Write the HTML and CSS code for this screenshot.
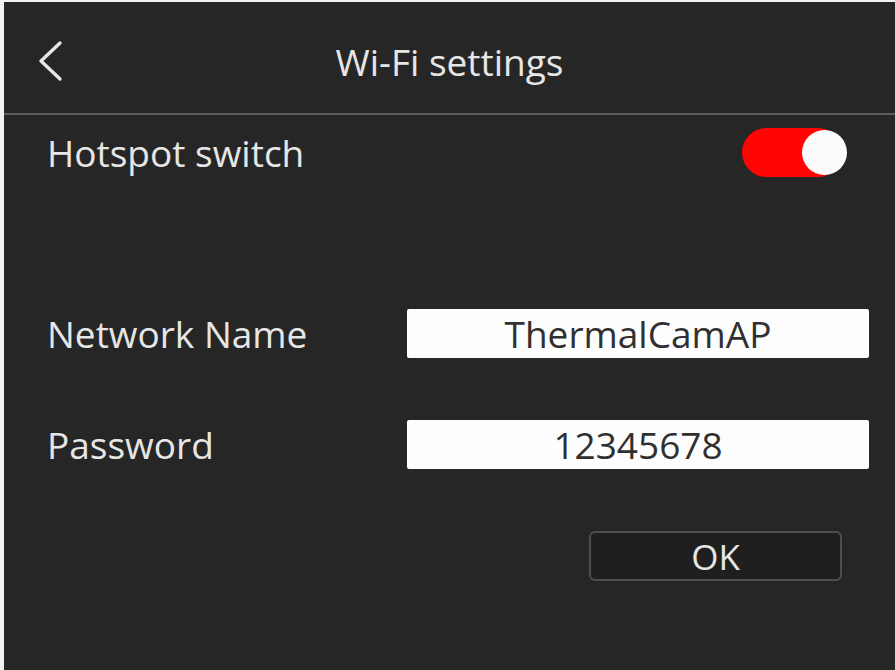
FILE: index.html
```html
<!DOCTYPE html>
<html lang="en">
<head>
<meta charset="utf-8">
<title>Wi-Fi settings</title>
<link rel="stylesheet" href="styles.css">
</head>
<body>
<div class="screen">
  <header class="header">
    <div class="back">
      <svg width="30" height="42" viewBox="0 0 30 42"><polyline points="25,3 6,21 25,39" fill="none" stroke="#e6e6e6" stroke-width="3.4" stroke-linecap="round" stroke-linejoin="round"/></svg>
    </div>
    <div class="title">Wi-Fi settings</div>
    <div></div>
  </header>
  <div class="row hotspot">
    <span class="label">Hotspot switch</span>
    <div class="toggle"><span class="knob"></span></div>
  </div>
  <div class="row field">
    <span class="label">Network Name</span>
    <div class="input">ThermalCamAP</div>
  </div>
  <div class="row field">
    <span class="label">Password</span>
    <div class="input">12345678</div>
  </div>
  <div class="actions">
    <button class="ok">OK</button>
  </div>
</div>
</body>
</html>
```
FILE: styles.css
```css
html, body {
  margin: 0;
  padding: 0;
  background: #f2f2f2;
}
body {
  padding: 2px 0 0 4px;
  width: 891px;
  height: 668px;
  overflow: hidden;
  font-family: "Open Sans", "Noto Sans", sans-serif;
}
.screen {
  height: 668px;
  background: #262626;
  color: #e6e6e6;
  display: flex;
  flex-direction: column;
}
.header {
  height: 111px;
  border-bottom: 2px solid #5e5e5e;
  display: grid;
  grid-template-columns: 1fr auto 1fr;
  align-items: center;
}
.back {
  padding-left: 31px;
  display: flex;
  align-items: center;
  margin-top: 6px;
}
.back svg { display: block; }
.title {
  font-size: 37px;
  margin-top: 8px;
}
.row {
  display: flex;
  align-items: center;
  justify-content: space-between;
  padding-left: 43px;
}
.label {
  font-size: 37px;
}
.hotspot {
  height: 74px;
  padding-right: 53px;
}
.toggle {
  width: 100px;
  height: 49px;
  border-radius: 25px;
  background: #ff0505;
  display: flex;
  align-items: center;
  justify-content: flex-end;
}
.knob {
  width: 45px;
  height: 45px;
  border-radius: 50%;
  background: #fbfbfb;
  margin-right: -5px;
}
.field {
  height: 49px;
  margin-top: 120px;
  padding-right: 26px;
}
.field + .field {
  margin-top: 62px;
}
.input {
  width: 462px;
  height: 49px;
  background: #fdfdfd;
  border-radius: 2px;
  color: #303030;
  font-size: 37px;
  display: flex;
  align-items: center;
  justify-content: center;
}
.actions {
  margin-top: 62px;
  display: flex;
  justify-content: flex-end;
  padding-right: 53px;
}
.ok {
  width: 253px;
  height: 50px;
  box-sizing: border-box;
  background: #1f1f1f;
  border: 2px solid #4e4e4e;
  border-radius: 6px;
  color: #e6e6e6;
  font-family: inherit;
  font-size: 35px;
  padding: 0;
  display: flex;
  align-items: center;
  justify-content: center;
}
```
